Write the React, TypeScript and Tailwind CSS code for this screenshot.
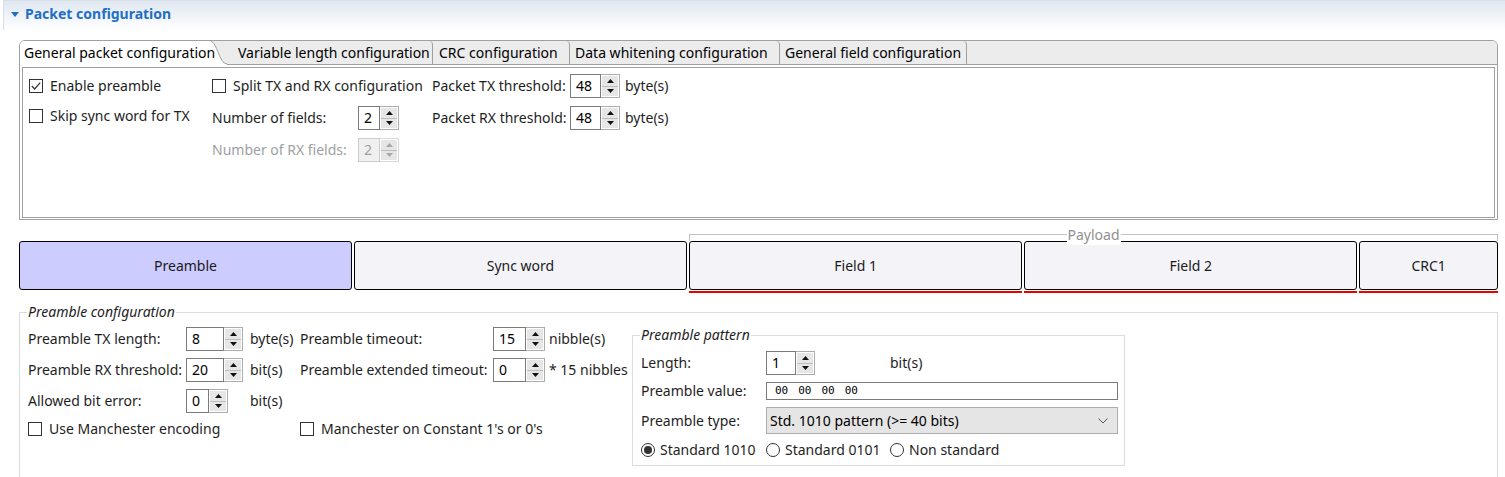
import React from 'react';
import clsx from 'clsx';

const Tri = ({ up, dim }: { up?: boolean; dim?: boolean }) => (
  <svg width="7" height="4" viewBox="0 0 7 4">
    <polygon points={up ? '0,4 7,4 3.5,0' : '0,0 7,0 3.5,4'} fill={dim ? '#a8a8a8' : '#111'} />
  </svg>
);

const Spinner = ({ value, inputW, disabled }: { value: string; inputW: string; disabled?: boolean }) => (
  <div className="flex h-[24px] shrink-0">
    <div
      className={clsx(
        'flex h-full items-center border pl-[5px]',
        inputW,
        disabled ? 'border-[#cccccc] bg-[#f0f0f0] text-[#a0a0a0]' : 'border-[#7a7a7a] bg-white text-black'
      )}
    >
      {value}
    </div>
    <div
      className={clsx(
        'flex h-full w-[19px] flex-col border border-l-0 p-[1px]',
        disabled ? 'border-[#d8d8d8]' : 'border-[#adadad]'
      )}
    >
      <div className="flex flex-1 items-center justify-center bg-[#e6e6e6]">
        <Tri up dim={disabled} />
      </div>
      <div className="h-[1px] bg-[#bdbdbd]" />
      <div className="flex flex-1 items-center justify-center bg-[#e6e6e6]">
        <Tri dim={disabled} />
      </div>
    </div>
  </div>
);

const Check = ({ label, checked }: { label: string; checked?: boolean }) => (
  <div className="flex items-center gap-[7px]">
    <div className="flex h-[14px] w-[14px] items-center justify-center border border-[#333333] bg-white">
      {checked && (
        <svg width="12" height="12" viewBox="0 0 12 12">
          <polyline points="1.8,6 4.7,9 10.2,2.6" fill="none" stroke="#333" strokeWidth="1.2" />
        </svg>
      )}
    </div>
    <span>{label}</span>
  </div>
);

const Radio = ({ label, on, w }: { label: string; on?: boolean; w: string }) => (
  <div className={clsx('flex items-center gap-[5px]', w)}>
    <div className="flex h-[14px] w-[14px] items-center justify-center rounded-full border border-[#333333] bg-white">
      {on && <div className="h-[8px] w-[8px] rounded-full bg-[#333333]" />}
    </div>
    <span>{label}</span>
  </div>
);

const tabs = [
  { label: 'Variable length configuration', w: 'w-[206px]', pl: 'pl-[11px]' },
  { label: 'CRC configuration', w: 'w-[137px]', pl: 'pl-[6px]' },
  { label: 'Data whitening configuration', w: 'w-[210px]', pl: 'pl-[5px]' },
  { label: 'General field configuration', w: 'w-[187px]', pl: 'pl-[5px]' },
];

const PacketBox = ({ label, active, w, red }: { label: string; active?: boolean; w: string; red?: boolean }) => (
  <div className={clsx('flex flex-col', w)}>
    <div
      className={clsx(
        'flex h-[49px] items-center justify-center rounded-[3px] border border-black text-[#1a1a1a]',
        active ? 'bg-[#ccccff]' : 'bg-[#f4f4f8]'
      )}
    >
      {label}
    </div>
    <div className={clsx('mt-[1px] h-[2px]', red ? 'bg-[#ee0000]' : 'bg-transparent')} />
  </div>
);

export default function App() {
  return (
    <div className="relative h-[477px] w-[1505px] overflow-hidden bg-white font-['Noto_Sans',sans-serif] text-[14px] leading-[20px] text-[#1e1e1e]">
      {/* section header */}
      <div className="ml-[3px] flex h-[30px] items-center border-l border-t border-[#d9dfe7] bg-gradient-to-b from-[#dfe7f1] to-white pb-[3px] pl-[7px]">
        <svg width="8" height="5" viewBox="0 0 8 5" className="mr-[6px]">
          <polygon points="0,0 8,0 4,5" fill="#1f6fc5" />
        </svg>
        <span className="text-[14px] font-bold text-[#1f6fc5]">Packet configuration</span>
      </div>

      {/* tab folder */}
      <div className="ml-[19px] mt-[10px] h-[180px] w-[1479px] overflow-hidden rounded-t-[6px] border border-[#a0a0a0]">
        <div className="flex h-[24px] bg-[#ececec]">
          <div className="relative flex w-[207px] items-center bg-white pl-[4px] text-black">
            General packet configuration
            <svg width="16" height="24" viewBox="0 0 16 24" className="absolute right-0 top-0">
              <path d="M0,0 C6,0 8,23 16,23 L16,0 Z" fill="#ececec" />
              <path d="M0,0.5 C6,0.5 8,23 16,23" fill="none" stroke="#a0a0a0" />
            </svg>
          </div>
          {tabs.map((t) => (
            <div
              key={t.label}
              className={clsx('flex items-center rounded-tr-[4px] border-b border-r border-[#a0a0a0] text-black', t.w, t.pl)}
            >
              {t.label}
            </div>
          ))}
          <div className="flex-1 border-b border-[#a0a0a0]" />
        </div>
        <div className="px-[2px] pt-[2px]">
          <div className="flex h-[151px] border border-[#a0a0a0] pl-[6px] pt-[6px]">
            <div className="flex w-[183px] flex-col gap-[6px]">
              <div className="flex h-[24px] items-center">
                <Check label="Enable preamble" checked />
              </div>
              <div className="flex h-[24px] items-center">
                <Check label="Skip sync word for TX" />
              </div>
            </div>
            <div className="flex w-[220px] flex-col gap-[8px]">
              <div className="flex h-[24px] items-center">
                <Check label="Split TX and RX configuration" />
              </div>
              <div className="flex h-[24px] items-center">
                <span className="w-[146px]">Number of fields:</span>
                <Spinner value="2" inputW="w-[22px]" />
              </div>
              <div className="flex h-[24px] items-center">
                <span className="w-[146px] text-[#a0a0a0]">Number of RX fields:</span>
                <Spinner value="2" inputW="w-[22px]" disabled />
              </div>
            </div>
            <div className="flex flex-col gap-[8px]">
              <div className="flex h-[24px] items-center">
                <span className="w-[138px]">Packet TX threshold:</span>
                <Spinner value="48" inputW="w-[31px]" />
                <span className="ml-[5px]">byte(s)</span>
              </div>
              <div className="flex h-[24px] items-center">
                <span className="w-[138px]">Packet RX threshold:</span>
                <Spinner value="48" inputW="w-[31px]" />
                <span className="ml-[5px]">byte(s)</span>
              </div>
            </div>
          </div>
        </div>
      </div>

      {/* packet structure */}
      <div className="ml-[19px] mt-[14px] flex w-[1479px] items-end gap-[2px]">
        <PacketBox label="Preamble" active w="w-[334px]" />
        <PacketBox label="Sync word" w="w-[334px]" />
        <div className="flex w-[809px] flex-col">
          <div className="relative h-[7px] border-l border-r border-t border-[#c4c4c4]">
            <span className="absolute left-1/2 top-[-10px] -translate-x-1/2 bg-white px-[1px] text-[#909090]">Payload</span>
          </div>
          <div className="flex gap-[2px]">
            <PacketBox label="Field 1" red w="w-[334px]" />
            <PacketBox label="Field 2" red w="w-[334px]" />
            <PacketBox label="CRC1" red w="w-[139px]" />
          </div>
        </div>
      </div>

      {/* preamble configuration */}
      <fieldset className="ml-[19px] mt-[9px] h-[200px] w-[1479px] border border-[#dcdcdc] pl-[8px]">
        <legend className="ml-[-1px] px-[1px] italic">Preamble configuration</legend>
        <div className="flex items-start pt-[5px]">
          <div className="flex w-[604px] flex-col">
            <div className="flex h-[24px] items-center">
              <span className="w-[158px]">Preamble TX length:</span>
              <div className="w-[64px]"><Spinner value="8" inputW="w-[38px]" /></div>
              <span className="w-[50px]">byte(s)</span>
              <span className="w-[193px]">Preamble timeout:</span>
              <div className="w-[56px]"><Spinner value="15" inputW="w-[33px]" /></div>
              <span>nibble(s)</span>
            </div>
            <div className="mt-[7px] flex h-[24px] items-center">
              <span className="w-[158px]">Preamble RX threshold:</span>
              <div className="w-[64px]"><Spinner value="20" inputW="w-[38px]" /></div>
              <span className="w-[50px]">bit(s)</span>
              <span className="w-[193px]">Preamble extended timeout:</span>
              <div className="w-[56px]"><Spinner value="0" inputW="w-[33px]" /></div>
              <span>* 15 nibbles</span>
            </div>
            <div className="mt-[7px] flex h-[24px] items-center">
              <span className="w-[158px]">Allowed bit error:</span>
              <div className="w-[64px]"><Spinner value="0" inputW="w-[23px]" /></div>
              <span>bit(s)</span>
            </div>
            <div className="mt-[6px] flex h-[20px] items-center">
              <div className="w-[272px]">
                <Check label="Use Manchester encoding" />
              </div>
              <Check label="Manchester on Constant 1's or 0's" />
            </div>
          </div>

          <fieldset className="mt-[-2px] w-[493px] border border-[#dcdcdc] pb-[5px] pl-[8px]">
            <legend className="ml-[-1px] px-[1px] italic">Preamble pattern</legend>
            <div className="flex flex-col pt-[6px]">
              <div className="flex h-[24px] items-center">
                <span className="w-[125px]">Length:</span>
                <div className="w-[124px]"><Spinner value="1" inputW="w-[30px]" /></div>
                <span>bit(s)</span>
              </div>
              <div className="mt-[7px] flex h-[18px] items-center">
                <span className="w-[125px]">Preamble value:</span>
                <div className="flex h-[18px] w-[352px] items-center gap-[10px] border border-[#7a7a7a] pl-[8px] font-['DejaVu_Sans_Mono',monospace] text-[11px] text-black">
                  <span>00</span>
                  <span>00</span>
                  <span>00</span>
                  <span>00</span>
                </div>
              </div>
              <div className="mt-[7px] flex h-[27px] items-center">
                <span className="w-[125px]">Preamble type:</span>
                <div className="flex h-[27px] w-[352px] items-center justify-between border border-[#adadad] bg-[#e5e5e5] pl-[3px] pr-[9px] text-black">
                  <span>Std. 1010 pattern (&gt;= 40 bits)</span>
                  <svg width="10" height="6" viewBox="0 0 10 6">
                    <polyline points="0.5,0.5 5,5 9.5,0.5" fill="none" stroke="#555" strokeWidth="1" />
                  </svg>
                </div>
              </div>
              <div className="mt-[6px] flex h-[20px] items-center">
                <Radio label="Standard 1010" on w="w-[125px]" />
                <Radio label="Standard 0101" w="w-[124px]" />
                <Radio label="Non standard" w="w-[120px]" />
              </div>
            </div>
          </fieldset>
        </div>
      </fieldset>
    </div>
  );
}
